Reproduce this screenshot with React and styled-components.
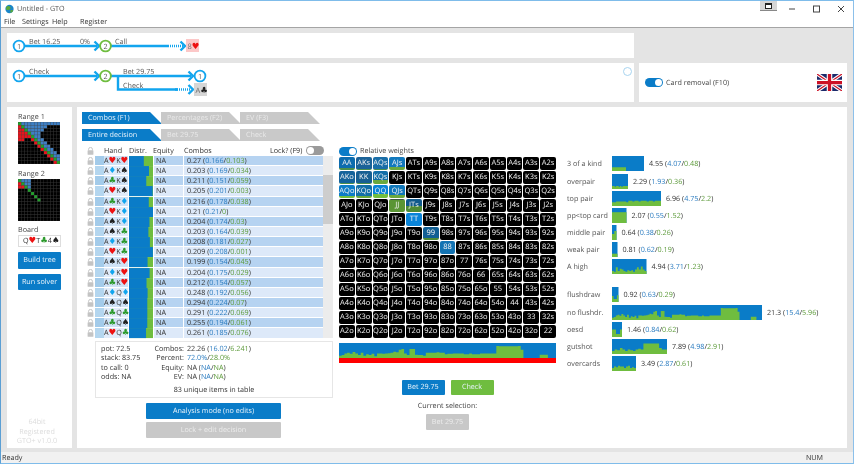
import React from 'react';
import styled, { createGlobalStyle } from 'styled-components';

const BLUE = '#0a7cc8';
const GREEN = '#6fbd3f';

const GlobalStyle = createGlobalStyle`
  html, body {
    margin: 0;
    padding: 0;
    width: 854px;
    height: 464px;
    overflow: hidden;
    background: #fff;
    font-family: "Open Sans", "Noto Sans", sans-serif;
    font-size: 7.2px;
    text-rendering: geometricPrecision;
    color: #444;
  }
`;

const Window = styled.div`
  width: 854px;
  height: 464px;
  box-sizing: border-box;
  border-top: 1px solid #7fbcea;
  border-left: 1px solid #5b9fd4;
  border-right: 1px solid #8cc0ea;
  border-bottom: 1px solid #7fbcea;
  display: flex;
  flex-direction: column;
  position: relative;
  will-change: transform;
`;

const TitleBar = styled.div`
  height: 15px;
  display: flex;
  align-items: center;
  padding-left: 4px;
  gap: 3px;
  color: #555;
  position: relative;
`;

const WinControls = styled.div`
  position: absolute;
  top: 0;
  right: 0;
  height: 15px;
`;

const WinGlyph = styled.svg`
  position: absolute;
  top: 0;
  right: 0;
`;

const MenuBar = styled.div`
  height: 11px;
  display: flex;
  align-items: center;
  color: #333;
  padding-left: 3px;
  border-bottom: 1px solid #a5a5a5;
`;

const MenuItem = styled.span`
  width: ${p => p.$w}px;
  flex: none;
`;

const Content = styled.div`
  flex: 1;
  background: #e4e4e4;
  box-sizing: border-box;
  padding: 5px 6px 4px;
  display: grid;
  grid-template-columns: 627px 208px;
  grid-template-rows: 25px 39px 341px;
  gap: 5px;
`;

const StatusBar = styled.div`
  height: 11px;
  background: #f1f1f1;
  display: flex;
  align-items: center;
  justify-content: space-between;
  padding: 0 30px 0 1px;
  color: #333;
`;

const Panel = styled.div`
  background: #fff;
  position: relative;
`;

const CardRemoval = styled(Panel)`
  display: flex;
  align-items: center;
  padding-left: 6px;
  gap: 3px;
`;

const Flag = styled.svg`
  position: absolute;
  left: 178px;
  top: 11px;
`;

const Toggle = styled.div`
  width: 18px;
  height: 9px;
  border-radius: 5px;
  background: ${p => (p.$on ? BLUE : '#9a9a9a')};
  position: relative;
  flex: none;
  &::after {
    content: '';
    position: absolute;
    top: 1px;
    ${p => (p.$on ? 'right: 1px;' : 'left: 1px;')}
    width: 7px;
    height: 7px;
    border-radius: 50%;
    background: #fff;
  }
`;

const Spinner = styled.div`
  position: absolute;
  left: 616px;
  top: 4px;
  width: 7px;
  height: 7px;
  border-radius: 50%;
  border: 1px solid #a8d4f0;
`;

const MainRow = styled.div`
  grid-column: 1 / span 2;
  display: flex;
  gap: 5px;
`;

const SidePanel = styled(Panel)`
  width: 65px;
  flex: none;
  box-sizing: border-box;
  padding: 5px 0 0 11px;
`;

const SideLabel = styled.div`
  height: 10px;
  line-height: 10px;
  margin-top: ${p => p.$top || 0}px;
`;

const RangeGrid = styled.svg`
  display: block;
`;

const BoardInput = styled.div`
  width: 43px;
  height: 12px;
  box-sizing: border-box;
  border: 1px solid #ddd;
  padding-left: 4px;
  line-height: 10px;
  color: #333;
`;

const Button = styled.div`
  width: ${p => p.$w}px;
  height: ${p => p.$h}px;
  line-height: ${p => p.$h}px;
  border-radius: 1px;
  text-align: center;
  background: ${p => p.$bg};
  color: ${p => p.$fg || '#e8f3fb'};
  margin-top: ${p => p.$top || 0}px;
  flex: none;
`;

const VersionInfo = styled.div`
  position: absolute;
  left: 0;
  right: 5px;
  top: 311px;
  text-align: center;
  color: #dcdcdc;
  line-height: 9.6px;
`;

const MainPanel = styled(Panel)`
  flex: 1;
  display: flex;
  padding: 5px 0 0 5px;
  box-sizing: border-box;
`;

const LeftColumn = styled.div`
  width: 251px;
  flex: none;
`;

const TabRow = styled.div`
  display: flex;
  height: 12px;
  margin-bottom: 5px;
`;

const Tab = styled.div`
  width: 80px;
  margin-right: -1px;
  height: 12px;
  line-height: 12px;
  box-sizing: border-box;
  padding-left: 6px;
  background: ${p => (p.$active ? BLUE : '#c9c9c9')};
  color: ${p => (p.$active ? '#e6f2fb' : '#e9e9e9')};
  clip-path: polygon(0 0, 68px 0, 100% 100%, 0 100%);
`;

const TableHead = styled.div`
  height: 10px;
  line-height: 10px;
  display: flex;
  align-items: center;
  position: relative;
  color: #333;
  padding-left: 5px;
`;

const HeadCell = styled.span`
  position: absolute;
  left: ${p => p.$x}px;
`;

const HeadToggle = styled.div`
  position: absolute;
  left: 224px;
  top: 0;
`;

const TableWrap = styled.div`
  display: flex;
`;

const Rows = styled.div`
  width: 241px;
  flex: none;
`;

const Row = styled.div`
  height: 10.15px;
  display: flex;
  align-items: stretch;
  line-height: 10px;
  color: #333;
`;

const LockCell = styled.div`
  width: 13px;
  flex: none;
  display: flex;
  align-items: center;
  padding-left: 5px;
  box-sizing: border-box;
`;

const ShadeCell = styled.div`
  width: 9px;
  flex: none;
  background: ${p => (p.$dark ? '#a3cbea' : '#b4d6ef')};
  border-bottom: 1px solid #fff;
  box-sizing: border-box;
`;

const HandCell = styled.div`
  width: 24px;
  flex: none;
  text-align: center;
  background: ${p => (p.$dark ? '#cfe2f6' : '#e1ecfa')};
  border-bottom: 1px solid #fff;
  box-sizing: border-box;
  margin-right: 1px;
`;

const DistrBar = styled.svg`
  flex: none;
  display: block;
  margin-right: 1px;
`;

const EquityCell = styled.div`
  width: 29px;
  flex: none;
  padding-left: 2px;
  box-sizing: border-box;
  background: ${p => (p.$dark ? '#b6d3f1' : '#dde9f9')};
  border-bottom: 1px solid #fff;
  margin-right: 1px;
`;

const CombosCell = styled.div`
  width: 139px;
  flex: none;
  padding-left: 3px;
  box-sizing: border-box;
  background: ${p => (p.$dark ? '#b6d3f1' : '#dde9f9')};
  border-bottom: 1px solid #fff;
`;

const Scrollbar = styled.div`
  width: 10px;
  height: 182px;
  background: #ececec;
  padding-top: 19px;
  box-sizing: border-box;
`;

const ScrollThumb = styled.div`
  height: 49px;
  background: #cdcdcd;
`;

const SummaryBox = styled.div`
  margin: 2px 0 0 13px;
  width: 238px;
  height: 57px;
  box-sizing: border-box;
  border: 1px solid #e6e6e6;
  padding: 3px 0 0 5px;
  display: grid;
  grid-template-columns: 40px 46px 1fr;
  grid-auto-rows: 9.6px;
  line-height: 9.6px;
  color: #333;
  white-space: nowrap;
`;

const SummaryKey = styled.span`
  text-align: right;
  padding-right: 3px;
`;

const SummaryFoot = styled.div`
  grid-column: 1 / span 3;
  text-align: center;
  margin-top: 3px;
  padding-right: 5px;
`;

const Blue = styled.span`
  color: #2b7cc0;
`;

const Green = styled.span`
  color: #5c9a3a;
`;

const CenterButtons = styled.div`
  margin-left: 64px;
  display: flex;
  flex-direction: column;
`;

const MatrixColumn = styled.div`
  width: 217px;
  margin-left: 6px;
  flex: none;
`;

const RelativeRow = styled.div`
  height: 10px;
  display: flex;
  align-items: center;
  gap: 3px;
  margin-top: 34px;
  color: #444;
`;

const Matrix = styled.div`
  display: grid;
  grid-template-columns: repeat(13, 1fr);
  grid-template-rows: repeat(13, 13px);
  gap: 1px;
  margin-top: 1px;
  width: 217px;
  height: 181px;
`;

const Cell = styled.div`
  border-radius: 2px;
  color: #f4f4f4;
  font-size: 7.5px;
  line-height: 13px;
  text-align: center;
  overflow: hidden;
  background: ${p => (p.$top
    ? `linear-gradient(${p.$top} 0 ${13 - p.$h}px, ${p.$bottom} ${13 - p.$h}px)`
    : '#000')};
`;

const WeightChart = styled.svg`
  display: block;
  margin-top: 5px;
`;

const ActionRow = styled.div`
  display: flex;
  justify-content: center;
  gap: 6px;
  margin-top: 17px;
`;

const SelectionLabel = styled.div`
  text-align: center;
  margin-top: 7px;
  line-height: 9px;
`;

const SelectionButton = styled(Button)`
  margin: 3px auto 0;
`;

const StatsColumn = styled.div`
  margin-left: 11px;
  padding-top: 44px;
`;

const StatRow = styled.div`
  display: flex;
  align-items: center;
  height: 15px;
  margin-bottom: ${p => p.$gap}px;
  color: #333;
  white-space: nowrap;
`;

const StatName = styled.span`
  width: 45px;
  flex: none;
  color: #555;
`;

const StatValue = styled.span`
  margin-left: 5px;
`;

const StatBar = styled.svg`
  flex: none;
  display: block;
`;

const SUIT = {
  h: { ch: '♥', c: '#ee1111' },
  d: { ch: '♦', c: '#12a5ee' },
  c: { ch: '♣', c: '#2c9a2c' },
  s: { ch: '♠', c: '#222' },
};

const SuitMark = styled.span`
  color: ${p => p.$c};
  font-family: "DejaVu Sans", sans-serif;
  font-size: 8.5px;
  line-height: 1;
  letter-spacing: -0.6px;
  margin-right: 0.6px;
`;

const Card = ({ text }) => (
  <>
    {text.match(/../g).map((c, i) => (
      <React.Fragment key={i}>
        {c[0]}
        <SuitMark $c={SUIT[c[1]].c}>{SUIT[c[1]].ch}</SuitMark>
      </React.Fragment>
    ))}
  </>
);

const HANDS = [
  ['AhKh', '0.27', 0.166, 0.103],
  ['AdKs', '0.203', 0.169, 0.034],
  ['AcKs', '0.211', 0.151, 0.059],
  ['AhKs', '0.205', 0.201, 0.003],
  ['AcKd', '0.216', 0.178, 0.038],
  ['AhKd', '0.21', 0.21, 0],
  ['AsKd', '0.204', 0.174, 0.03],
  ['AsKc', '0.203', 0.164, 0.039],
  ['AdKc', '0.208', 0.181, 0.027],
  ['AhKc', '0.209', 0.208, 0.001],
  ['AsKh', '0.199', 0.154, 0.045],
  ['AdKh', '0.204', 0.175, 0.029],
  ['AcKh', '0.212', 0.154, 0.057],
  ['AdQd', '0.248', 0.192, 0.056],
  ['AsQs', '0.294', 0.224, 0.07],
  ['AcQc', '0.291', 0.222, 0.069],
  ['AcQs', '0.255', 0.194, 0.061],
  ['AhQc', '0.261', 0.185, 0.076],
];

const RANKS = 'AKQJT98765432'.split('');

const HILITE = {
  AA: ['#0d6cae', '#4d8f4a', 2],
  AKs: ['#1a6298', '#4d8f4a', 1],
  AQs: ['#1a6ea8', '#4d8f4a', 1],
  AJs: ['#1279bd', '#6aa83e', 3],
  AKo: ['#14639b', '#4d8f4a', 1],
  KK: ['#175f92', '#4d8f4a', 1],
  KQs: ['#126ea8', '#6aa83e', 4],
  AQo: ['#0e7dc8', '#72bd3f', 2],
  KQo: ['#126fa8', '#6aa83e', 2],
  QQ: ['#0a84d8', '#72bd3f', 4],
  QJs: ['#1078bb', '#6aa83e', 3],
  JJ: ['#3d5a40', '#5a9534', 12],
  JTs: ['#115a8c', '#4f8a35', 6],
  TT: ['#0a84d8', '#0a84d8', 0],
  99: ['#115f94', '#4f8a35', 2],
  88: ['#1273b3', '#1273b3', 0],
};

const cellName = (r, c) => {
  if (r === c) return RANKS[r] + RANKS[c];
  return r < c ? `${RANKS[r]}${RANKS[c]}s` : `${RANKS[c]}${RANKS[r]}o`;
};

// blue/green weight profile along a bar, values are green height 0..1
const stepPath = (levels, w, h) => {
  const step = w / levels.length;
  let d = `M0 ${h}`;
  levels.forEach((l, i) => {
    const y = (h - l * h).toFixed(1);
    d += `L${(i * step).toFixed(1)} ${y}L${((i + 1) * step).toFixed(1)} ${y}`;
  });
  return `${d}L${w} ${h}Z`;
};

const MAIN_PROFILE = [
  .15, .2, .3, .35, .28, .4, .3, .2, .35, .15, .25, .2, .28, .12, .3, .3, .28, .3, .32, .35, .42, .38, .55, .6,
  .3, .2, .6, .6, .22, .2, .2, .15, .35, .35, .35, .35, .38, .35, .35, .25, .28, .28, .3, .3, .3, .3, .25, .25,
  .3, .25, .25, .25, .3, .3, .3, .3, .3, .3, .8, .78, .78, .78, .78, .78, .78, .78, .8, .55, 0, 0, 0, 0, 0, 0,
  .22, .22, .22, 0, 0, 0,
];

const STATS = [
  ['3 of a kind', 32, '4.55', '4.07', '0.48', [.25, .25, .25, .25, .25, .25, .25, 0, 0, 0, 0, 0, 0, 0, 0, 0], 3],
  ['overpair', 16, '2.29', '1.93', '0.36', [.2, .2, .15, .2, .2, .15, .2, .15, .2, .2, .2, .2], 2],
  ['top pair', 49, '6.96', '4.75', '2.2', [.25, .25, .3, .3, .3, .3, .3, .25, .35, .35, .3, .35, .35, .3, .35, .35, .35, .3, .35, .35, .3, .35, .35, .35], 2],
  ['pp<top card', 14.5, '2.07', '0.55', '1.52', [.72, .72, .72, .72], 2],
  ['middle pair', 4.5, '0.64', '0.38', '0.26', [.4, .6], 2],
  ['weak pair', 5.5, '0.81', '0.62', '0.19', [.22, .22], 2],
  ['A high', 34.5, '4.94', '3.71', '1.23', [.2, .15, .45, .2, .35, .3, .2, .15, .25, .2, .25, .15, .3, .45, .3, .5, .3, .2], 13],
  ['flushdraw', 6.5, '0.92', '0.63', '0.29', [.4, .2, .2, .45], 3],
  ['no flushdr.', 150, '21.3', '15.4', '5.96', MAIN_PROFILE, 2],
  ['oesd', 10, '1.46', '0.84', '0.62', [.5, .5, .2, .2, .5], 2],
  ['gutshot', 55, '7.89', '4.98', '2.91', [.2, .3, .25, .4, .3, .2, .3, .25, .2, .3, .35, .3, .7, .7, .7, .7, .7, .7, .4, .3, .3], 2],
  ['overcards', 24, '3.49', '2.87', '0.61', [.2, .3, .25, .35, .3, .3, .2, .3, .35, .2, .25, .2], 0],
];

const rangeColor = (r, c, kind) => {
  if (r === c) return kind === 1 || r < 7 ? '#22a02c' : '#000';
  if (kind === 1) {
    if (c > r) {
      const limit = [13, 9, 8, 7, 7, 8, 9, 10, 11, 12, 13, 13, 13][r];
      return c < limit ? '#3e7fc4' : '#000';
    }
    const redTo = [0, 1, 3, 3, 3, 2, 0, 0, 0, 0, 0, 0, 0][r];
    return c < redTo || c === r - 1 ? '#e8141c' : '#000';
  }
  if (c > r) return r < 3 && c <= 3 ? '#3e7fc4' : '#000';
  return r < 3 ? '#e8141c' : '#000';
};

const MiniRange = ({ kind }) => (
  <RangeGrid width="42" height="42" viewBox="0 0 130 130">
    <rect width="130" height="130" fill="#444" />
    {RANKS.map((_, r) => RANKS.map((_, c) => (
      <rect key={`${r}-${c}`} x={c * 10 + 0.5} y={r * 10 + 0.5} width="9" height="9" fill={rangeColor(r, c, kind)} />
    )))}
  </RangeGrid>
);

const LockIcon = () => (
  <svg width="7" height="8" viewBox="0 0 7 8">
    <path d="M1.6 3.4V2.3a1.9 1.9 0 0 1 3.8 0v1.1" fill="none" stroke="#c4c4c4" strokeWidth="1" />
    <rect x="0.6" y="3.3" width="5.8" height="4.4" rx="0.5" fill="#c4c4c4" />
  </svg>
);

const LINE = '#12a5ee';

const TreeNode = ({ x, y, n, color = LINE }) => (
  <g>
    <circle cx={x} cy={y} r="5.4" fill="#fff" stroke={color} strokeWidth="1.8" />
    <text x={x} y={y + 2.6} textAnchor="middle" fontSize="7.2" fill="#555">{n}</text>
  </g>
);

const Arrow = ({ x1, x2, y }) => (
  <g>
    <line x1={x1} x2={x2 - 2} y1={y} y2={y} stroke={LINE} strokeWidth="2.4" />
    <path d={`M${x2 - 4.5} ${y - 4.5}L${x2} ${y}L${x2 - 4.5} ${y + 4.5}`} fill="none" stroke={LINE} strokeWidth="2.4" />
  </g>
);

const DottedArrow = ({ x1, xd, x2, y }) => (
  <g>
    <line x1={x1} x2={xd} y1={y} y2={y} stroke={LINE} strokeWidth="2.4" />
    <line x1={xd} x2={x2 - 2} y1={y} y2={y} stroke={LINE} strokeWidth="2.4" strokeDasharray="1 1" />
    <path d={`M${x2 - 4.5} ${y - 4.5}L${x2} ${y}L${x2 - 4.5} ${y + 4.5}`} fill="none" stroke={LINE} strokeWidth="2.4" />
  </g>
);

const TreeLabel = ({ x, y, children }) => (
  <text x={x} y={y} fontSize="7.2" fill="#555">{children}</text>
);

const TreeSvg = styled.svg`
  position: absolute;
  left: 0;
  top: 0;
`;

const TreeOne = () => (
  <TreeSvg width="627" height="25">
    <TreeLabel x={22} y={11}>Bet 16.25</TreeLabel>
    <TreeLabel x={73} y={11}>0%</TreeLabel>
    <TreeLabel x={108} y={11}>Call</TreeLabel>
    <Arrow x1={17} x2={92} y={13} />
    <DottedArrow x1={104} xd={161} x2={178} y={13} />
    <TreeNode x={12} y={13} n="1" />
    <TreeNode x={98.5} y={13} n="2" color={GREEN} />
    <rect x="179" y="6" width="13" height="13" fill="#fcc8c8" />
    <text x="180.5" y="15.5" fontSize="7.5" fill="#777">8<tspan fill="#ee1111" fontSize="8.5" fontFamily="DejaVu Sans">♥</tspan></text>
  </TreeSvg>
);

const TreeTwo = () => (
  <TreeSvg width="627" height="39">
    <TreeLabel x={22} y={11}>Check</TreeLabel>
    <TreeLabel x={116} y={11}>Bet 29.75</TreeLabel>
    <TreeLabel x={116} y={25}>Check</TreeLabel>
    <Arrow x1={17} x2={92} y={13} />
    <Arrow x1={104} x2={186} y={13} />
    <path d="M111 13V26.5H171" fill="none" stroke={LINE} strokeWidth="2.4" />
    <DottedArrow x1={168} xd={170} x2={186} y={26.5} />
    <TreeNode x={12} y={13} n="1" />
    <TreeNode x={98.5} y={13} n="2" color={GREEN} />
    <TreeNode x={193} y={13} n="1" />
    <rect x="187" y="20" width="13" height="13" fill="#d6d6d6" />
    <text x="188.5" y="29.5" fontSize="7.5" fill="#666">A<tspan fill="#222" fontSize="8.5" fontFamily="DejaVu Sans">♣</tspan></text>
  </TreeSvg>
);

const UkFlag = () => (
  <Flag width="25" height="17" viewBox="0 0 50 34">
    <rect width="50" height="34" fill="#1b2a6b" />
    <path d="M0 0L50 34M50 0L0 34" stroke="#fff" strokeWidth="7" />
    <path d="M0 0L50 34M50 0L0 34" stroke="#cc1126" strokeWidth="2.4" />
    <path d="M25 0V34M0 17H50" stroke="#fff" strokeWidth="11" />
    <path d="M25 0V34M0 17H50" stroke="#cc1126" strokeWidth="6.5" />
  </Flag>
);

const AppIcon = () => (
  <svg width="9" height="10" viewBox="0 0 10 10">
    <circle cx="5" cy="5" r="4.6" fill="#1a86c8" />
    <path d="M1.2 3.5C3 1 5 1.5 6 3S5 6 3 6 1 5 1.2 3.5ZM6 6.5c1.5-.5 3-.3 3.2.3C8.5 8.5 7 9.4 6 9.3Z" fill="#5aa83a" />
  </svg>
);

const App = () => (
  <>
    <GlobalStyle />
    <Window>
      <TitleBar>
        <AppIcon />
        <span>Untitled - GTO</span>
        <WinControls>
          <WinGlyph width="100" height="14" viewBox="0 0 100 14">
            <rect x="7" y="0" width="17" height="9" fill="#d6d6d6" />
            <line x1="7" x2="24" y1="9.5" y2="9.5" stroke="#888" />
            <rect x="12.5" y="2.5" width="6" height="5" fill="#fff" stroke="#222" />
            <line x1="12" x2="18" y1="3.5" y2="3.5" stroke="#222" />
            <line x1="36" x2="42" y1="8" y2="8" stroke="#444" />
            <rect x="60.5" y="5" width="6" height="6" fill="none" stroke="#444" />
            <path d="M85 5L91 11M91 5L85 11" stroke="#444" />
          </WinGlyph>
        </WinControls>
      </TitleBar>
      <MenuBar>
        <MenuItem $w={18}>File</MenuItem>
        <MenuItem $w={30}>Settings</MenuItem>
        <MenuItem $w={28}>Help</MenuItem>
        <MenuItem $w={40}>Register</MenuItem>
      </MenuBar>
      <Content>
        <Panel><TreeOne /></Panel>
        <div />
        <Panel>
          <TreeTwo />
          <Spinner />
        </Panel>
        <CardRemoval>
          <Toggle $on />
          <span>Card removal (F10)</span>
          <UkFlag />
        </CardRemoval>
        <MainRow>
          <SidePanel>
            <SideLabel>Range 1</SideLabel>
            <MiniRange kind={1} />
            <SideLabel $top={5}>Range 2</SideLabel>
            <MiniRange kind={2} />
            <SideLabel $top={4}>Board</SideLabel>
            <BoardInput><Card text="QhTc4s" /></BoardInput>
            <Button $w={43} $h={17} $bg={BLUE} $top={5}>Build tree</Button>
            <Button $w={43} $h={16} $bg={BLUE} $top={5}>Run solver</Button>
            <VersionInfo>64bit<br />Registered<br />GTO+ v1.0.0</VersionInfo>
          </SidePanel>
          <MainPanel>
            <LeftColumn>
              <TabRow>
                <Tab $active>Combos (F1)</Tab>
                <Tab>Percentages (F2)</Tab>
                <Tab>EV (F3)</Tab>
              </TabRow>
              <TabRow>
                <Tab $active>Entire decision</Tab>
                <Tab>Bet 29.75</Tab>
                <Tab>Check</Tab>
              </TabRow>
              <TableHead>
                <LockIcon />
                <HeadCell $x={22}>Hand</HeadCell>
                <HeadCell $x={47}>Distr.</HeadCell>
                <HeadCell $x={71}>Equity</HeadCell>
                <HeadCell $x={102}>Combos</HeadCell>
                <HeadCell $x={188}>Lock? (F9)</HeadCell>
                <HeadToggle><Toggle /></HeadToggle>
              </TableHead>
              <TableWrap>
                <Rows>
                  {HANDS.map(([hand, total, b, g], i) => {
                    const dark = i % 2 === 0;
                    return (
                      <Row key={i}>
                        <LockCell><LockIcon /></LockCell>
                        <ShadeCell $dark={dark} />
                        <HandCell $dark={dark}><Card text={hand} /></HandCell>
                        <DistrBar width="24" height="10.15" viewBox="0 0 24 10">
                          <rect width="24" height="10" fill={GREEN} />
                          <rect width={(24 * b) / (b + g)} height="10" fill={BLUE} />
                        </DistrBar>
                        <EquityCell $dark={dark}>NA</EquityCell>
                        <CombosCell $dark={dark}>
                          {total} (<Blue>{b}</Blue>/<Green>{g}</Green>)
                        </CombosCell>
                      </Row>
                    );
                  })}
                </Rows>
                <Scrollbar><ScrollThumb /></Scrollbar>
              </TableWrap>
              <SummaryBox>
                <span>pot: 72.5</span><SummaryKey>Combos:</SummaryKey><span>22.26 (<Blue>16.02</Blue>/<Green>6.241</Green>)</span>
                <span>stack: 83.75</span><SummaryKey>Percent:</SummaryKey><span><Blue>72.0%</Blue>/<Green>28.0%</Green></span>
                <span>to call: 0</span><SummaryKey>Equity:</SummaryKey><span>NA (<Blue>NA</Blue>/<Green>NA</Green>)</span>
                <span>odds: NA</span><SummaryKey>EV:</SummaryKey><span>NA (<Blue>NA</Blue>/<Green>NA</Green>)</span>
                <SummaryFoot>83 unique items in table</SummaryFoot>
              </SummaryBox>
              <CenterButtons>
                <Button $w={135} $h={16} $bg={BLUE} $top={5}>Analysis mode (no edits)</Button>
                <Button $w={135} $h={16} $bg="#c8c8c8" $fg="#ececec" $top={3}>Lock + edit decision</Button>
              </CenterButtons>
            </LeftColumn>
            <MatrixColumn>
              <RelativeRow>
                <Toggle $on />
                <span>Relative weights</span>
              </RelativeRow>
              <Matrix>
                {RANKS.map((_, r) => RANKS.map((_, c) => {
                  const name = cellName(r, c);
                  const hi = HILITE[name];
                  return (
                    <Cell key={name} $top={hi && hi[0]} $bottom={hi && hi[1]} $h={hi && hi[2]}>{name}</Cell>
                  );
                }))}
              </Matrix>
              <WeightChart width="217" height="20" viewBox="0 0 217 20">
                <rect width="217" height="15" fill={BLUE} />
                <path d={stepPath(MAIN_PROFILE, 217, 15)} fill={GREEN} />
                <rect y="15" width="217" height="5" fill="#ff0000" />
              </WeightChart>
              <ActionRow>
                <Button $w={43} $h={15} $bg={BLUE}>Bet 29.75</Button>
                <Button $w={43} $h={15} $bg={GREEN}>Check</Button>
              </ActionRow>
              <SelectionLabel>Current selection:</SelectionLabel>
              <SelectionButton $w={43} $h={16} $bg="#c8c8c8" $fg="#ececec">Bet 29.75</SelectionButton>
            </MatrixColumn>
            <StatsColumn>
              {STATS.map(([name, w, total, b, g, levels, gap]) => (
                <StatRow key={name} $gap={gap}>
                  <StatName>{name}</StatName>
                  <StatBar width={w} height="15" viewBox={`0 0 ${w} 15`}>
                    <rect width={w} height="15" fill={BLUE} />
                    <path d={stepPath(levels, w, 15)} fill={GREEN} />
                  </StatBar>
                  <StatValue>{total} (<Blue>{b}</Blue>/<Green>{g}</Green>)</StatValue>
                </StatRow>
              ))}
            </StatsColumn>
          </MainPanel>
        </MainRow>
      </Content>
      <StatusBar>
        <span>Ready</span>
        <span>NUM</span>
      </StatusBar>
    </Window>
  </>
);

export default App;
